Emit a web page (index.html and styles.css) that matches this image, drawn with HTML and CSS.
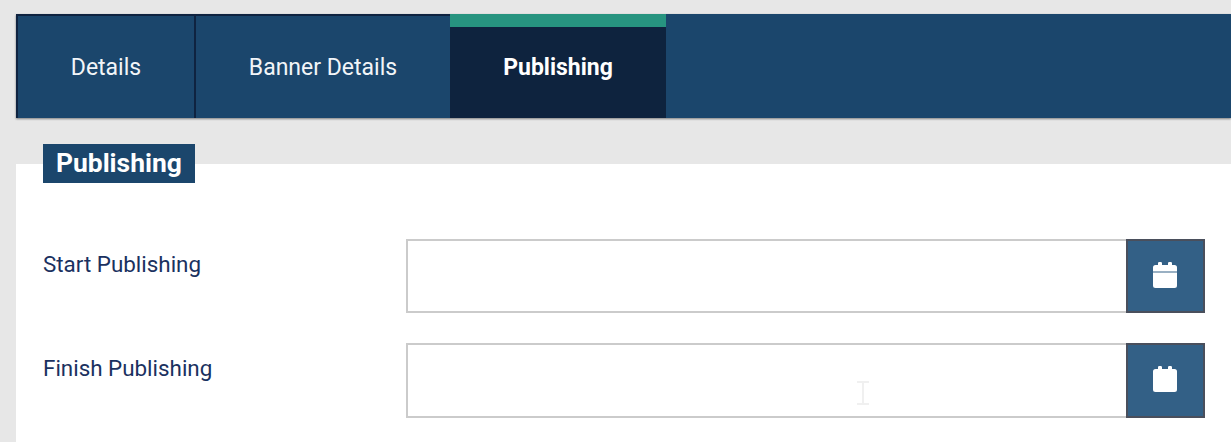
FILE: index.html
```html
<!DOCTYPE html>
<html lang="en">
<head>
<meta charset="utf-8">
<title>Publishing</title>
<link rel="stylesheet" href="styles.css">
</head>
<body>
<nav class="tabs">
  <a class="tab tab-details">Details</a>
  <a class="tab tab-banner">Banner Details</a>
  <a class="tab tab-active">Publishing</a>
</nav>
<section class="panel">
  <h2 class="legend">Publishing</h2>
  <div class="form">
    <div class="row row-start">
      <label class="label">Start Publishing</label>
      <div class="field">
        <div class="input"></div>
        <button class="cal" type="button" aria-label="Pick date">
          <svg class="cal-icon" viewBox="0 0 24 26" width="24" height="26"><path fill="#fff" d="M5 1.200A1.200 1.200 0 0 1 6.200 0h1.600A1.200 1.200 0 0 1 9 1.200V3h6V1.200A1.200 1.200 0 0 1 16.200 0h1.600A1.200 1.200 0 0 1 19 1.200V3h2.500A2.500 2.500 0 0 1 24 5.500v4H0v-4A2.500 2.500 0 0 1 2.500 3H5zM0 10.500h24v13a2.500 2.500 0 0 1-2.500 2.500h-19A2.500 2.500 0 0 1 0 23.500z"/></svg>
        </button>
      </div>
    </div>
    <div class="row row-finish">
      <label class="label">Finish Publishing</label>
      <div class="field">
        <div class="input">
          <svg class="ibeam" viewBox="0 0 14 24" width="14" height="24"><path fill="none" stroke="#f0f0f0" stroke-width="2" d="M1 1h12M7 1v22M1 23h12"/></svg>
        </div>
        <button class="cal" type="button" aria-label="Pick date">
          <svg class="cal-icon" viewBox="0 0 24 26" width="24" height="26"><path fill="#fff" d="M5 1.200A1.200 1.200 0 0 1 6.200 0h1.600A1.200 1.200 0 0 1 9 1.200V3h6V1.200A1.200 1.200 0 0 1 16.200 0h1.600A1.200 1.200 0 0 1 19 1.200V3h2.500A2.500 2.500 0 0 1 24 5.500v18a2.500 2.500 0 0 1-2.500 2.500h-19A2.500 2.500 0 0 1 0 23.500v-18A2.500 2.500 0 0 1 2.500 3H5z"/></svg>
        </button>
      </div>
    </div>
  </div>
</section>
</body>
</html>
```
FILE: styles.css
```css
* { box-sizing: border-box; }
html, body { height: 100%; }
body {
  margin: 0;
  padding: 14px 0 0 16px;
  background: #e7e7e7;
  font-family: Roboto, "Liberation Sans", sans-serif;
  overflow: hidden;
}
.tabs {
  display: flex;
  height: 104px;
  background: #1b466c;
  box-shadow: 0 1px 2px rgba(0, 0, 0, 0.45);
}
.tab {
  display: flex;
  align-items: center;
  justify-content: center;
  color: #f2f5f8;
  font-size: 23px;
  border-top: 2px solid #0f2340;
}
.tab-details {
  width: 180px;
  border-left: 2px solid #0f2340;
  border-right: 2px solid #0f2340;
}
.tab-banner { width: 254px; }
.tab-active {
  width: 216px;
  padding-bottom: 11px;
  background: #0e233e;
  border-top: 13px solid #279480;
  color: #fff;
  font-weight: 700;
}
.panel {
  position: relative;
  margin-top: 46px;
  min-height: 300px;
  padding: 75px 26px 0 27px;
  background: #fff;
}
.legend {
  position: absolute;
  top: -20px;
  left: 27px;
  margin: 0;
  padding: 0 13px;
  height: 39px;
  line-height: 38px;
  background: #1b466c;
  color: #fff;
  font-size: 26.4px;
  font-weight: 700;
}
.row { display: flex; }
.row-start { height: 74px; margin-bottom: 30px; }
.row-finish { height: 75px; }
.label {
  width: 363px;
  padding-top: 11px;
  color: #1a3160;
  font-size: 22.4px;
  line-height: 28px;
}
.field { display: flex; width: 799px; }
.input {
  position: relative;
  flex: 1;
  background: #fff;
  border: 2px solid #cbcbcb;
  border-right: 0;
}
.cal {
  display: flex;
  align-items: center;
  justify-content: center;
  width: 79px;
  padding: 0 1px 2px 0;
  background: #336086;
  border: 2px solid #4a4f5c;
}
.row-finish .cal { padding-bottom: 3px; }
.cal-icon { display: block; }
.ibeam {
  position: absolute;
  left: 448px;
  top: 36px;
}
```
